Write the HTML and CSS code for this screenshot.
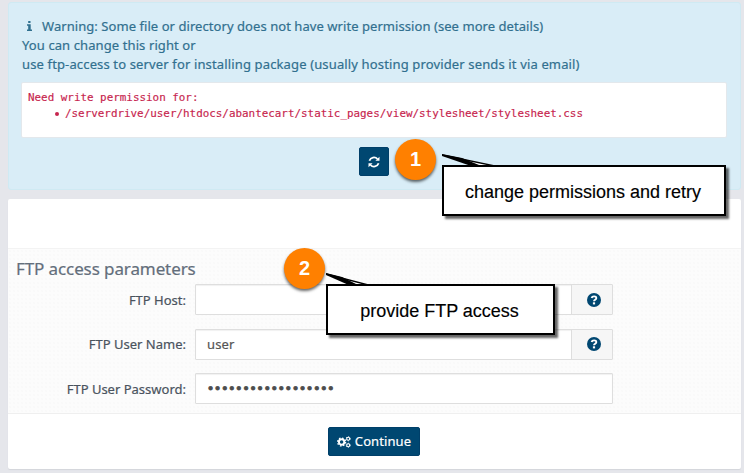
FILE: index.html
```html
<!DOCTYPE html>
<html lang="en">
<head>
<meta charset="utf-8">
<title>Package installer</title>
<link rel="stylesheet" href="styles.css">
</head>
<body>
<main class="page">
  <section class="alert">
    <p class="line line-warning"><svg class="info" viewBox="0 0 5 10"><path d="M1.2 0h2.3v2H1.2zM0 3.3h3.7v5.2H5V10H0V8.5h1.2V4.8H0z"/></svg><span>Warning: Some file or directory does not have write permission (see more details)</span></p>
    <p class="line line-change"><span>You can change this right or</span></p>
    <p class="line line-ftp"><span>use ftp-access to server for installing package (usually hosting provider sends it via email)</span></p>
    <div class="log">
      <div>Need write permission for:</div>
      <div class="path"><i class="dot"></i>/serverdrive/user/htdocs/abantecart/static_pages/view/stylesheet/stylesheet.css</div>
    </div>
    <div class="retry-row">
      <button class="btn retry" aria-label="Retry"><svg width="12" height="12" viewBox="0 0 12 12"><path class="arc" d="M1.4 4.7C2.6 1.2 7 .3 9.5 3M10.6 7.3C9.4 10.8 5 11.7 2.5 9"/><path class="tip" d="M11.5.7v4.1H7.4zM.5 11.3V7.2h4.1z"/></svg></button>
    </div>
  </section>

  <section class="panel">
    <div class="panel-head"></div>
    <form class="panel-body">
      <h2><span>FTP access parameters</span></h2>
      <div class="row"><label for="host" class="l-host">FTP Host:</label><div class="group"><input id="host" type="text"><span class="addon"><svg width="14" height="14" viewBox="0 0 14 14"><circle cx="7" cy="7" r="7"/><path class="q" d="M4.6 5C5.2 2.7 9.4 2.8 9.3 5.2C9.2 6.8 7 6.6 7 8.3"/><path class="qd" d="M5.9 9.3h2.2v2.1H5.9z"/></svg></span></div></div>
      <div class="row"><label for="user" class="l-user">FTP User Name:</label><div class="group"><input id="user" type="text" value="user"><span class="addon"><svg width="14" height="14" viewBox="0 0 14 14"><circle cx="7" cy="7" r="7"/><path class="q" d="M4.6 5C5.2 2.7 9.4 2.8 9.3 5.2C9.2 6.8 7 6.6 7 8.3"/><path class="qd" d="M5.9 9.3h2.2v2.1H5.9z"/></svg></span></div></div>
      <div class="row"><label class="l-pass">FTP User Password:</label><div class="group password"><span class="dots">••••••••••••••••••</span></div></div>
    </form>
    <div class="panel-foot">
      <button class="btn continue"><svg width="14" height="12" viewBox="0 0 14 12"><circle class="teeth" cx="4.6" cy="6" r="4"/><circle class="gear" cx="4.6" cy="6" r="2.7"/><circle class="teeth small" cx="11.2" cy="2.7" r="2.1"/><circle class="gear small" cx="11.2" cy="2.7" r="1.5"/><circle class="teeth small" cx="11.2" cy="9.3" r="2.1"/><circle class="gear small" cx="11.2" cy="9.3" r="1.5"/></svg><span>Continue</span></button>
    </div>
  </section>

  <div class="badge badge-1">1</div>
  <div class="callout callout-1"><svg class="tail" width="60" height="13" viewBox="0 0 60 13"><path class="fill" d="M1 1L34 11H50z"/><path d="M0 0L20 4L37 11V13H32L0 2z"/><path class="edge" d="M0 1L55 12.4"/></svg><span>change permissions and retry</span></div>
  <div class="badge badge-2">2</div>
  <div class="callout callout-2"><svg class="tail" width="46" height="13" viewBox="0 0 46 13"><path class="fill" d="M1 1L27 11H40z"/><path d="M0 0L16 4L30 11V13H25L0 2z"/><path class="edge" d="M0 1L44 12.4"/></svg><span>provide FTP access</span></div>
</main>
</body>
</html>
```
FILE: styles.css
```css
* { box-sizing: border-box; }
body { margin: 0; background: #e5e6eb; font-family: "Noto Sans", "Open Sans", sans-serif; font-size: 13px; }
.page { position: relative; width: 744px; height: 473px; padding: 2px 3px 0 8px; overflow: hidden; }
.alert { height: 188px; padding: 13px 14px 0 13px; background: #d9edf7; border: 1px solid #cfeaf3; border-radius: 3px; color: #31708f; }
.line { display: flex; align-items: center; height: 19px; margin: 0; white-space: nowrap; -webkit-text-stroke: .2px; }
.line-warning { padding-left: 5px; letter-spacing: .06px; }
.line-change { letter-spacing: .1px; }
.line-ftp { letter-spacing: .14px; }
.info { width: 5px; height: 10px; margin-right: 10px; fill: #31708f; }
.log { height: 56px; margin: 9px -1px 0 -1px; padding: 7px 6px; background: #fff; border: 1px solid #e3e8ec; border-radius: 2px; color: #c7254e; font: 10.9px/16px "DejaVu Sans Mono", monospace; white-space: nowrap; -webkit-text-stroke: .15px; }
.path { display: flex; align-items: center; padding-left: 27px; }
.dot { width: 4px; height: 4px; margin-right: 6px; border-radius: 50%; background: #c7254e; }
.retry-row { display: flex; padding: 9px 0 0 337px; }
.btn { display: flex; align-items: center; justify-content: center; padding: 0; border: 1px solid #003f69; border-radius: 2px; background: #004771; color: #fff; font: 13px "Noto Sans", sans-serif; }
.retry { width: 30px; height: 29px; }
.arc { fill: none; stroke: #fff; stroke-width: 1.8; }
.tip { fill: #fff; }
.panel { height: 270px; margin-top: 9px; background: #fff; border-radius: 2px; box-shadow: 0 1px 1px #d3d5db; }
.panel-head { height: 49px; }
.panel-body { height: 166px; padding: 9px 0 0 8px; background: radial-gradient(circle, #f9f9f9 0.6px, transparent 1px) 0 0 / 4px 4px, #fcfcfc; border-top: 1px solid #f3f3f3; border-bottom: 1px solid #efefef; }
h2 { display: flex; align-items: center; height: 20px; margin: 0 0 6px; color: #636e7b; font-size: 17px; font-weight: 400; letter-spacing: -.1px; white-space: nowrap; -webkit-text-stroke: .2px; }
.row { display: flex; align-items: center; height: 31px; margin-bottom: 13.5px; }
.row label { width: 170px; margin-right: 9px; color: #4a535e; text-align: right; white-space: nowrap; -webkit-text-stroke: .2px; }
.group { display: flex; width: 418px; height: 31px; border: 1px solid #dedede; border-radius: 1px; background: #fff; box-shadow: inset 0 1px 1px #f1f1f1; }
.group input { flex: 1; min-width: 0; padding: 0 11px; border: 0; background: none; color: #555; font: 13px "Noto Sans", sans-serif; letter-spacing: .1px; -webkit-text-stroke: .2px; }
.addon { display: flex; align-items: center; justify-content: center; width: 41px; padding-left: 4px; border-left: 1px solid #dedede; background: #f6f6f6; }
.addon circle { fill: #004771; }
.q { fill: none; stroke: #fff; stroke-width: 1.9; }
.qd { fill: #fff; }
.password { align-items: center; padding-left: 11px; }
.dots { color: #4d4d4d; font: 12px "DejaVu Sans", sans-serif; -webkit-text-stroke: .9px; }
.panel-foot { display: flex; justify-content: center; padding: 13px 1px 0 0; }
.continue { width: 92px; height: 29px; gap: 4px; font-size: 13px; letter-spacing: .1px; -webkit-text-stroke: .2px; }
.continue span { margin-top: -1px; }
.teeth { fill: none; stroke: #fff; stroke-width: 1.3; stroke-dasharray: 1.57 1.57; }
.gear { fill: none; stroke: #fff; stroke-width: 1.9; }
.teeth.small { stroke-width: .8; stroke-dasharray: 1.1 1.1; }
.gear.small { stroke-width: 1.1; }
.badge { position: absolute; display: flex; align-items: center; justify-content: center; width: 41px; height: 41px; border-radius: 50%; background: #ff8000; color: #fff; font: bold 20px "Liberation Sans", sans-serif; box-shadow: 0 2px 3px rgba(0,0,0,.6); }
.badge-1 { left: 395px; top: 139px; }
.badge-2 { left: 284px; top: 248px; }
.callout { position: absolute; display: flex; align-items: center; justify-content: center; height: 51px; padding: 3px 2px 0 0; border: 2px solid #000; background: #fff; color: #000; font: 18px "Liberation Sans", sans-serif; white-space: nowrap; box-shadow: 3px 3px 2px rgba(0,0,0,.6); -webkit-text-stroke: .15px; }
.callout-1 { left: 442px; top: 165px; width: 284px; }
.callout-2 { left: 326px; top: 284px; width: 229px; }
.tail { position: absolute; left: -2px; top: -13px; }
.fill { fill: #fff; }
.edge { fill: none; stroke: #000; stroke-width: 1.5; }
```
